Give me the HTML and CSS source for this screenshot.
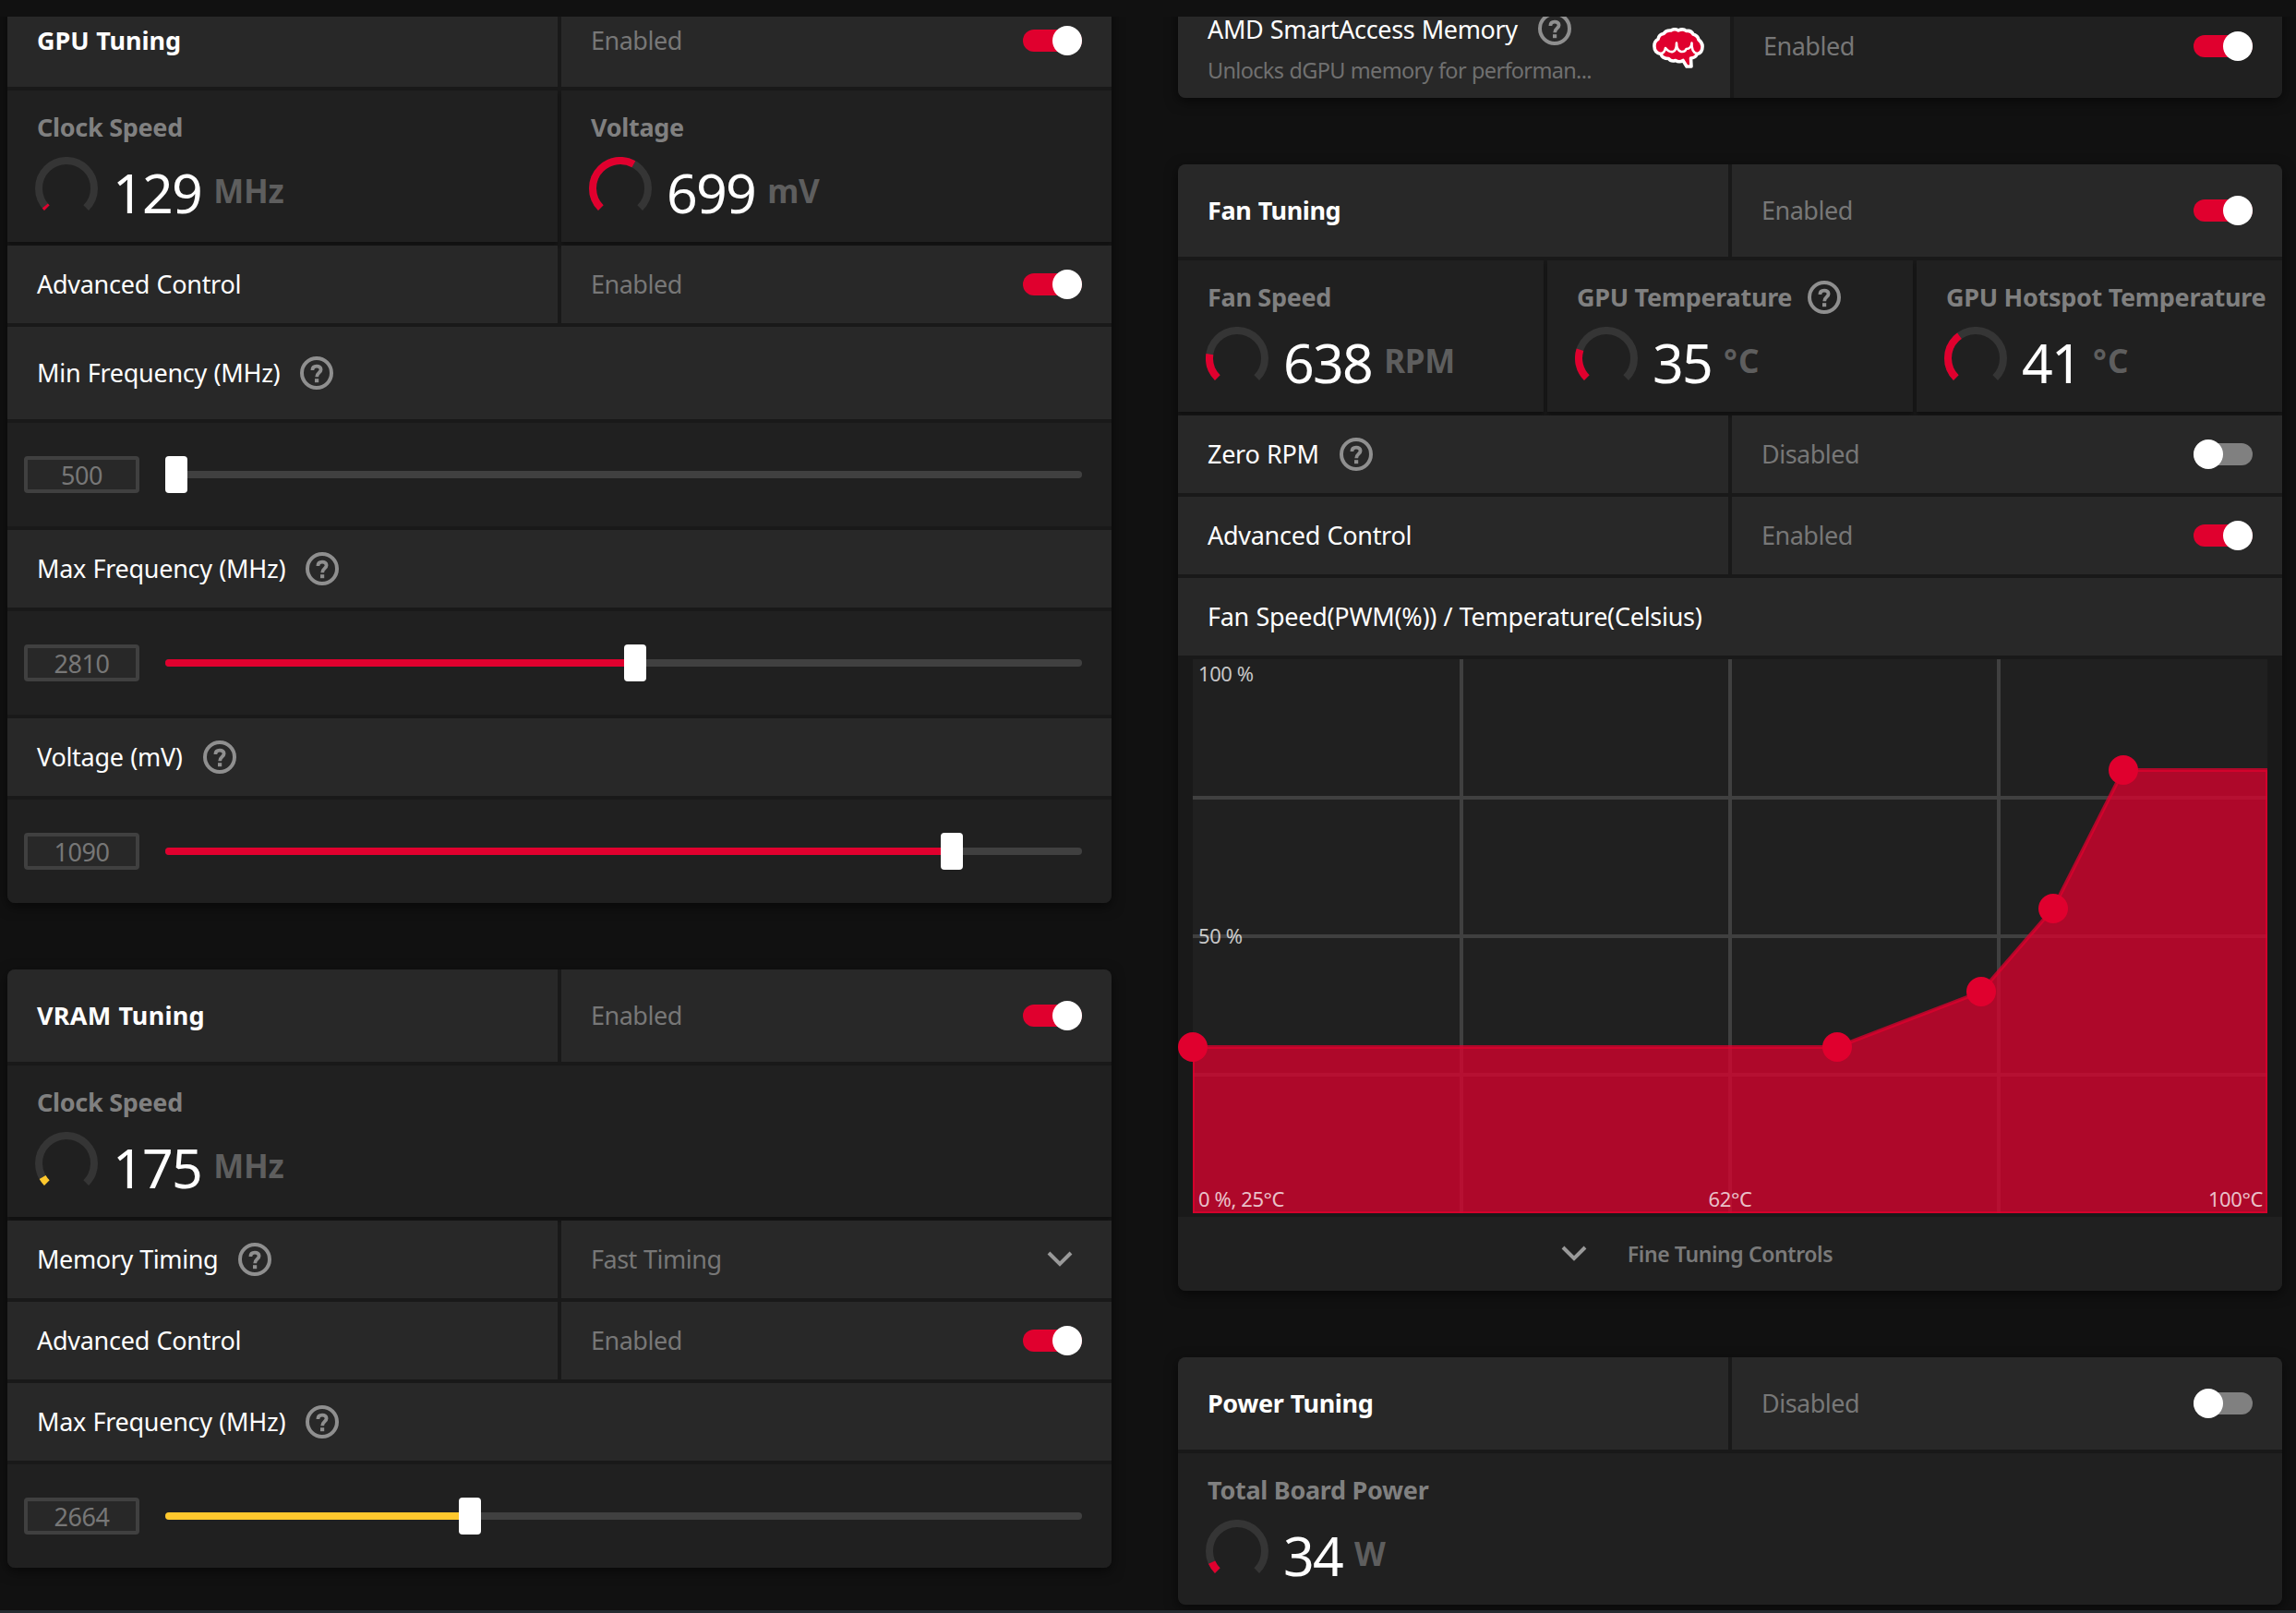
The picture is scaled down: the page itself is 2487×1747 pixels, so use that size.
FILE: index.html
```html
<!DOCTYPE html>
<html lang="en">
<head>
<meta charset="utf-8">
<title>Performance Tuning</title>
<link rel="stylesheet" href="styles.css">
</head>
<body>
<svg class="sprite" aria-hidden="true">
  <symbol id="help" viewBox="0 0 36 36">
    <circle cx="18" cy="18" r="16" fill="none" stroke="currentColor" stroke-width="4"/>
    <path d="M13.4 15 C13.4 12 15.4 10.600 18 10.600 C20.6 10.600 22.6 12 22.6 14.3 C22.6 17.7 18.2 17.8 18.2 22.2" fill="none" stroke="currentColor" stroke-width="3.8"/>
    <rect x="16" y="24.200" width="4.200" height="4" fill="currentColor"/>
  </symbol>
  <symbol id="chevron" viewBox="0 0 28 18">
    <path d="M2 2 L14 14 L26 2" fill="none" stroke="currentColor" stroke-width="4"/>
  </symbol>
  <symbol id="ring" viewBox="0 0 68 68">
    <path d="M12.8 55.2 A30 30 0 1 1 55.2 55.2" fill="none" stroke="#353535" stroke-width="8"/>
  </symbol>
</svg>

<main class="page">
  <div class="column">
    <section class="panel">
      <div class="split">
        <div class="cell tall"><h2>GPU Tuning</h2></div>
        <div class="cell tall state"><span>Enabled</span><i class="toggle on"></i></div>
      </div>
      <div class="split">
        <div class="stat">
          <div class="stat-label">Clock Speed</div>
          <div class="reading"><svg class="gauge red" viewBox="0 0 68 68"><use href="#ring"/><path pathLength="270" stroke-dasharray="6 400" d="M12.8 55.2 A30 30 0 1 1 55.2 55.2"/></svg><span class="num">129</span><span class="unit">MHz</span></div>
        </div>
        <div class="stat">
          <div class="stat-label">Voltage</div>
          <div class="reading"><svg class="gauge red" viewBox="0 0 68 68"><use href="#ring"/><path pathLength="270" stroke-dasharray="163.5 400" d="M12.8 55.2 A30 30 0 1 1 55.2 55.2"/></svg><span class="num">699</span><span class="unit">mV</span></div>
        </div>
      </div>
      <div class="split">
        <div class="cell"><span>Advanced Control</span></div>
        <div class="cell state"><span>Enabled</span><i class="toggle on"></i></div>
      </div>
      <div class="cell tall"><span>Min Frequency (MHz)</span><svg class="help"><use href="#help"/></svg></div>
      <div class="slider"><span class="value">500</span><div class="track red"><div class="fill" style="width:0px"></div><b class="thumb"></b></div></div>
      <div class="cell"><span>Max Frequency (MHz)</span><svg class="help"><use href="#help"/></svg></div>
      <div class="slider"><span class="value">2810</span><div class="track red"><div class="fill" style="width:497px"></div><b class="thumb"></b></div></div>
      <div class="cell"><span>Voltage (mV)</span><svg class="help"><use href="#help"/></svg></div>
      <div class="slider"><span class="value">1090</span><div class="track red"><div class="fill" style="width:840px"></div><b class="thumb"></b></div></div>
    </section>

    <section class="panel">
      <div class="split">
        <div class="cell tall"><h2 class="wide">VRAM Tuning</h2></div>
        <div class="cell tall state"><span>Enabled</span><i class="toggle on"></i></div>
      </div>
      <div class="stat">
        <div class="stat-label">Clock Speed</div>
        <div class="reading"><svg class="gauge yellow" viewBox="0 0 68 68"><use href="#ring"/><path pathLength="270" stroke-dasharray="15 400" d="M12.8 55.2 A30 30 0 1 1 55.2 55.2"/></svg><span class="num">175</span><span class="unit">MHz</span></div>
      </div>
      <div class="split">
        <div class="cell"><span class="snug">Memory Timing</span><svg class="help"><use href="#help"/></svg></div>
        <div class="cell state select"><span>Fast Timing</span><svg class="chevron"><use href="#chevron"/></svg></div>
      </div>
      <div class="split">
        <div class="cell"><span>Advanced Control</span></div>
        <div class="cell state"><span>Enabled</span><i class="toggle on"></i></div>
      </div>
      <div class="cell"><span>Max Frequency (MHz)</span><svg class="help"><use href="#help"/></svg></div>
      <div class="slider"><span class="value">2664</span><div class="track yellow"><div class="fill" style="width:318px"></div><b class="thumb"></b></div></div>
    </section>
  </div>

  <div class="column">
    <section class="panel">
      <div class="split memory">
        <div class="cell feature">
          <div class="feature-text">
            <div class="feature-title"><span>AMD SmartAccess Memory</span><svg class="help"><use href="#help"/></svg></div>
            <p>Unlocks dGPU memory for performan...</p>
          </div>
          <svg class="brain" viewBox="0 0 56 44">
            <path d="M20 3 Q24 0.500 28 3 Q33 0.500 36.500 3.500 Q42 2.500 44 7 Q49 8.500 50 13 Q54.500 16.500 54 21 Q54 27 48.500 28.500 Q46 33 41.500 33 L42 42 L37 42 L33 35.500 Q29 38 25 35.500 Q20 37 17.500 33.500 Q10.500 33.500 9 28.500 Q2 27 2 20.500 Q1.500 15 6 12.500 Q7 7 12 6.500 Q14.500 2.500 20 3 Z" fill="#e0002e" stroke="#fff" stroke-width="3.600" stroke-linejoin="round"/>
            <path d="M9 28 Q13 27.500 14 22 Q18 27 22 26 Q26 25 26 16.500 Q26 24.500 31 26 Q35.500 26.500 36.500 23 Q42 23 42.500 16.500 Q42 26.500 48 28" fill="none" stroke="#fff" stroke-width="2.600" stroke-linejoin="round"/>
          </svg>
        </div>
        <div class="cell feature state dark"><span>Enabled</span><i class="toggle on"></i></div>
      </div>
    </section>

    <section class="panel">
      <div class="split">
        <div class="cell tall"><h2 class="snug">Fan Tuning</h2></div>
        <div class="cell tall state"><span>Enabled</span><i class="toggle on"></i></div>
      </div>
      <div class="thirds">
        <div class="stat">
          <div class="stat-label">Fan Speed</div>
          <div class="reading"><svg class="gauge red" viewBox="0 0 68 68"><use href="#ring"/><path pathLength="270" stroke-dasharray="53.5 400" d="M12.8 55.2 A30 30 0 1 1 55.2 55.2"/></svg><span class="num">638</span><span class="unit">RPM</span></div>
        </div>
        <div class="stat">
          <div class="stat-label"><span>GPU Temperature</span><svg class="help"><use href="#help"/></svg></div>
          <div class="reading"><svg class="gauge red" viewBox="0 0 68 68"><use href="#ring"/><path pathLength="270" stroke-dasharray="63 400" d="M12.8 55.2 A30 30 0 1 1 55.2 55.2"/></svg><span class="num">35</span><span class="unit deg">°C</span></div>
        </div>
        <div class="stat">
          <div class="stat-label">GPU Hotspot Temperature</div>
          <div class="reading"><svg class="gauge red" viewBox="0 0 68 68"><use href="#ring"/><path pathLength="270" stroke-dasharray="99.5 400" d="M12.8 55.2 A30 30 0 1 1 55.2 55.2"/></svg><span class="num">41</span><span class="unit deg">°C</span></div>
        </div>
      </div>
      <div class="split">
        <div class="cell"><span>Zero RPM</span><svg class="help"><use href="#help"/></svg></div>
        <div class="cell state"><span>Disabled</span><i class="toggle"></i></div>
      </div>
      <div class="split">
        <div class="cell"><span>Advanced Control</span></div>
        <div class="cell state"><span>Enabled</span><i class="toggle on"></i></div>
      </div>
      <div class="cell"><span>Fan Speed(PWM(%)) / Temperature(Celsius)</span></div>
      <svg class="chart" viewBox="0 0 1196 600">
        <clipPath id="plot"><rect x="16" y="0" width="1164" height="600"/></clipPath>
        <rect x="16" y="0" width="1164" height="600" fill="#202020"/>
        <path d="M307 0V600M598 0V600M889 0V600M16 150H1180M16 300H1180M16 450H1180" stroke="#404040" stroke-width="4" fill="none"/>
        <g class="axis">
          <text x="22" y="24">100 %</text>
          <text x="22" y="308">50 %</text>
        </g>
        <path clip-path="url(#plot)" d="M16 420H714L870 360L948 270L1024 120H1180V600H16Z" fill="#e0002e" fill-opacity=".74" stroke="#e0002e" stroke-opacity=".74" stroke-width="4"/>
        <g fill="#e0002e">
          <circle cx="16" cy="420" r="16"/><circle cx="714" cy="420" r="16"/><circle cx="870" cy="360" r="16"/><circle cx="948" cy="270" r="16"/><circle cx="1024" cy="120" r="16"/>
        </g>
        <g class="axis">
          <text x="22" y="593">0 %, 25°C</text>
          <text x="598" y="593" text-anchor="middle">62°C</text>
          <text x="1175" y="593" text-anchor="end">100°C</text>
        </g>
      </svg>
      <div class="more"><svg class="chevron"><use href="#chevron"/></svg><span>Fine Tuning Controls</span></div>
    </section>

    <section class="panel">
      <div class="split">
        <div class="cell tall"><h2 class="snug">Power Tuning</h2></div>
        <div class="cell tall state"><span>Disabled</span><i class="toggle"></i></div>
      </div>
      <div class="stat">
        <div class="stat-label">Total Board Power</div>
        <div class="reading"><svg class="gauge red" viewBox="0 0 68 68"><use href="#ring"/><path pathLength="270" stroke-dasharray="21 400" d="M12.8 55.2 A30 30 0 1 1 55.2 55.2"/></svg><span class="num">34</span><span class="unit">W</span></div>
      </div>
    </section>
  </div>
</main>
</body>
</html>
```
FILE: styles.css
```css
* { box-sizing: border-box; }

body {
  margin: 0;
  height: 1747px;
  overflow: hidden;
  background: #111;
  border-bottom: 3px solid #242b30;
  color: #fff;
  font-family: "Noto Sans", "Open Sans", sans-serif;
  font-size: 27px;
  letter-spacing: -0.28px;
}

.sprite { display: none; }

.page {
  display: flex;
  gap: 72px;
  height: 1726px;
  margin-top: 18px;
  padding-left: 8px;
  overflow: hidden;
}

.column {
  display: flex;
  flex-direction: column;
  gap: 72px;
  width: 1196px;
  margin-top: -24px;
}

.panel {
  display: flex;
  flex-direction: column;
  gap: 4px;
  flex: none;
  overflow: hidden;
  border-radius: 8px;
  background: #191919;
  box-shadow: 0 4px 14px rgba(0, 0, 0, 0.55);
}

.split, .thirds { display: grid; gap: 4px; }
.split { grid-template-columns: 1fr 1fr; }
.split.memory { grid-template-columns: 598px 594px; }
.thirds { grid-template-columns: 1fr 1fr 1fr; }

.cell {
  display: flex;
  align-items: center;
  height: 84px;
  padding: 0 32px;
  background: #282828;
  white-space: nowrap;
  word-spacing: 0.7px;
}
.cell > span, h2 { padding-bottom: 1px; }
.cell.tall { height: 100px; }
.cell.feature { height: 112px; justify-content: space-between; }
.cell.dark { background: #202020; }
.cell.state { justify-content: space-between; color: #777; letter-spacing: -0.5px; }

h2 { margin: 0; font-size: 27px; font-weight: 700; letter-spacing: -0.05px; }
.wide { letter-spacing: 0.25px; }
.snug { letter-spacing: -0.4px; }

.help {
  flex: none;
  width: 36px;
  height: 36px;
  margin-left: 22px;
  color: #8f8f8f;
}

.chevron { flex: none; width: 28px; height: 18px; color: #999; }
.select .chevron { margin-right: 10px; }

.toggle {
  display: flex;
  align-items: center;
  width: 64px;
  height: 24px;
  border-radius: 12px;
  background: #808080;
}
.toggle::after {
  content: "";
  width: 32px;
  height: 32px;
  border-radius: 50%;
  background: #fff;
  flex: none;
}
.toggle.on { justify-content: flex-end; background: #e0002e; }

.feature-title {
  display: flex;
  align-items: center;
  height: 36px;
  margin-top: 5px;
  letter-spacing: -0.35px;
}
.feature p {
  margin: 11px 0 0;
  color: #707070;
  font-size: 23.5px;
  letter-spacing: -0.68px;
  line-height: 32px;
}
.brain { width: 56px; height: 44px; flex: none; margin: 4px -4px 0 0; }

.stat {
  height: 164px;
  padding: 22px 0 0 30px;
  background: #202020;
  box-shadow: 0 4px 4px rgba(0, 0, 0, 0.35);
}
.stat-label {
  display: flex;
  align-items: center;
  height: 36px;
  margin-left: 2px;
  color: #808080;
  font-weight: 700;
  letter-spacing: -0.3px;
  line-height: 34px;
  white-space: nowrap;
}
.stat-label .help { margin-left: 17px; }
.reading { display: flex; align-items: flex-start; margin-top: 14px; }
.gauge { width: 68px; height: 68px; flex: none; }
.gauge > path { fill: none; stroke-width: 8; }
.gauge.red > path { stroke: #e0002e; }
.gauge.yellow > path { stroke: #ffc82d; }
.num {
  margin: 8px 0 0 16px;
  font-size: 59px;
  line-height: 60px;
  letter-spacing: -1.7px;
}
.unit {
  margin: 19px 0 0 13px;
  color: #5e5e5e;
  font-size: 35px;
  font-weight: 700;
  line-height: 35px;
}
.unit.deg { letter-spacing: 1px; }

.slider {
  display: flex;
  align-items: center;
  height: 112px;
  padding: 0 32px 0 18px;
  background: #202020;
}
.value {
  width: 125px;
  height: 40px;
  margin-right: 28px;
  border: 4px solid #404040;
  border-radius: 4px;
  background: #282828;
  color: #777;
  letter-spacing: -0.4px;
  line-height: 34px;
  text-align: center;
}
.track {
  display: flex;
  align-items: center;
  flex: 1;
  height: 8px;
  border-radius: 4px;
  background: #404040;
}
.fill { height: 8px; border-radius: 4px 0 0 4px; }
.red .fill { background: #e0002e; }
.yellow .fill { background: #ffc82d; }
.thumb { width: 24px; height: 40px; flex: none; border-radius: 4px; background: #fff; }

.chart { display: block; width: 1196px; height: 600px; }
.axis { fill: #fff; fill-opacity: 0.75; font-size: 22px; letter-spacing: -0.4px; }

.more {
  display: flex;
  align-items: center;
  justify-content: center;
  gap: 44px;
  height: 80px;
  padding-right: 72px;
  background: #202020;
  color: #7a7a7a;
  font-size: 23px;
  font-weight: 600;
  letter-spacing: -0.4px;
}
```
